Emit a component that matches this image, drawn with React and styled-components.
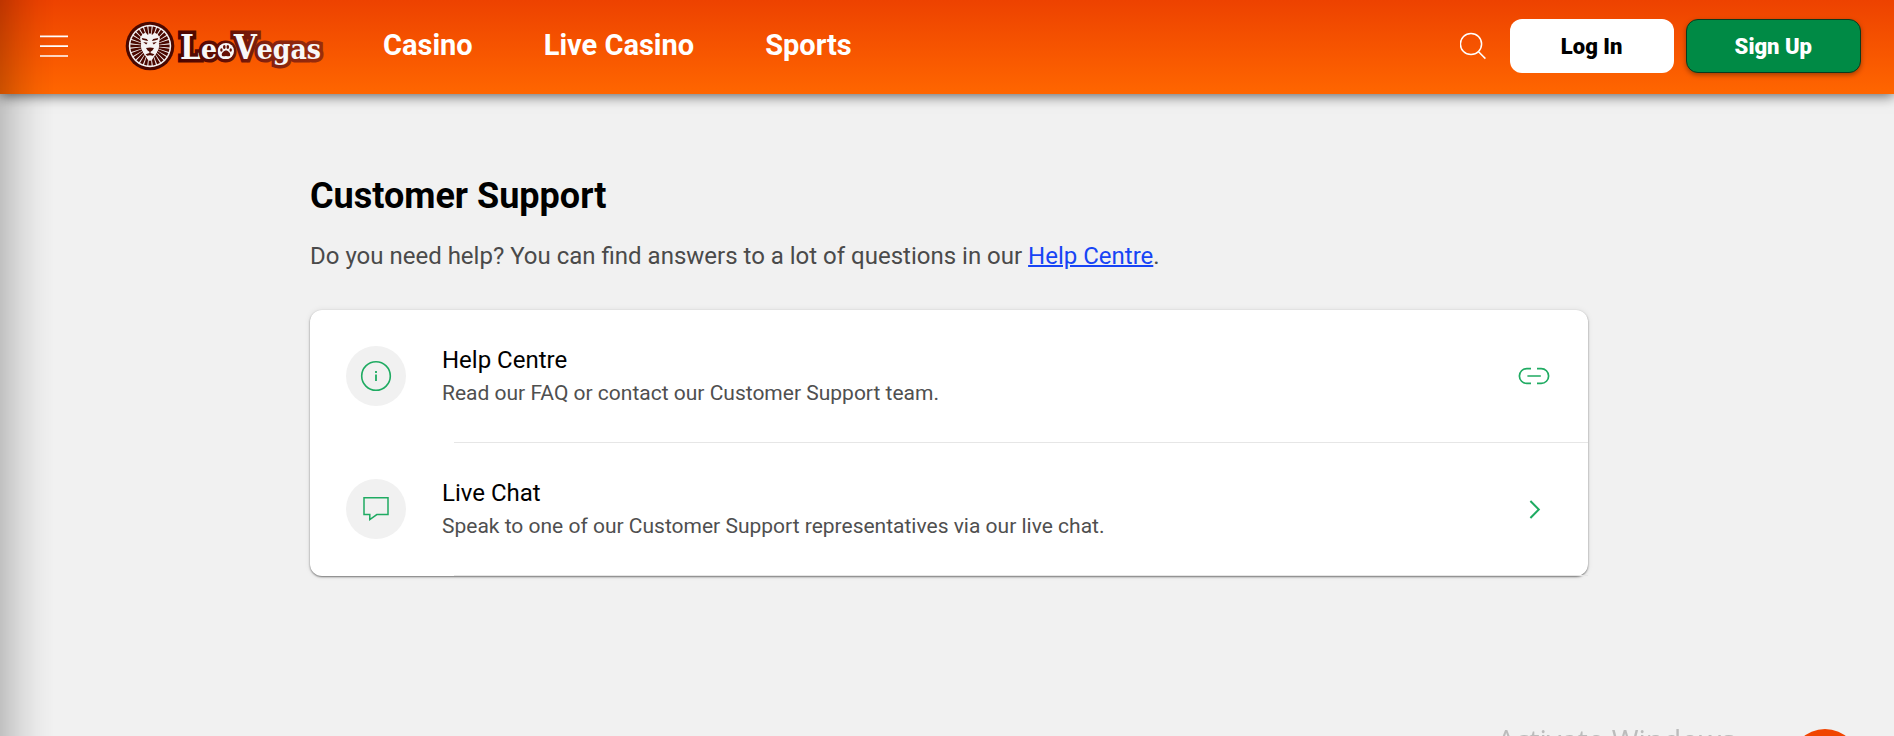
import React from 'react';
import styled, { createGlobalStyle } from 'styled-components';

const GlobalStyle = createGlobalStyle`
  *, *::before, *::after { box-sizing: border-box; }
  body {
    margin: 0;
    background: #f1f1f1;
    color: #000;
    font-family: Roboto, "Liberation Sans", sans-serif;
  }
  button { font: inherit; border: 0; cursor: pointer; }
`;

const Page = styled.div`
  min-height: 100vh;
`;

const Header = styled.header`
  display: flex;
  align-items: center;
  height: 94px;
  padding: 0 33px 2px 40px;
  background: linear-gradient(#ed4200, #ff6600);
  box-shadow: 0 2px 12px rgba(0, 0, 0, 0.6);
`;

const IconButton = styled.button`
  display: flex;
  padding: 0;
  background: none;
  color: #fff;
`;

const LogoLink = styled.a`
  display: flex;
  margin-left: 56px;
`;

const Nav = styled.nav`
  display: flex;
  gap: 71px;
  margin-left: 57px;
  padding-bottom: 2px;
`;

const NavLink = styled.a`
  color: #fff;
  font-size: 29px;
  font-weight: 700;
  line-height: 40px;
  text-decoration: none;
  white-space: nowrap;
`;

const Actions = styled.div`
  display: flex;
  align-items: center;
  gap: 12px;
  margin-left: auto;
`;

const SearchButton = styled(IconButton)`
  margin-right: 12px;
`;

const ActionButton = styled.button`
  height: 54px;
  padding: 0 48px;
  border-radius: 12px;
  background: #fff;
  color: #000;
  font-size: 22px;
  font-weight: 900;
  white-space: nowrap;
  min-width: 164px;
`;

const SignUpButton = styled(ActionButton)`
  min-width: 175px;
  border: 1px solid #0b3a1c;
  background: #008a45;
  color: #fff;
  box-shadow: 0 2px 5px rgba(0, 0, 0, 0.35);
`;

const Main = styled.main`
  max-width: 1282px;
  margin: 0 auto;
  padding: 80px 0 80px 4px;
`;

const Title = styled.h1`
  margin: 0;
  font-size: 36px;
  font-weight: 700;
  line-height: 44px;
`;

const Intro = styled.p`
  margin: 22px 0 38px;
  color: #4a4a4a;
  font-size: 24px;
  line-height: 32px;
`;

const InlineLink = styled.a`
  color: #1744f5;
  text-decoration-thickness: 2px;
`;

const Card = styled.ul`
  margin: 0;
  padding: 0;
  list-style: none;
  border-radius: 12px;
  background: #fff;
  box-shadow: 0 1px 2px rgba(0, 0, 0, 0.5), 0 0 6px rgba(0, 0, 0, 0.08);
`;

const Item = styled.li`
  &::after {
    content: "";
    display: block;
    height: 1px;
    margin-left: 144px;
    background: #e6e6e6;
  }
`;

const ItemLink = styled.a`
  display: flex;
  align-items: center;
  gap: 36px;
  padding: 33px 36px;
  color: inherit;
  text-decoration: none;
`;

const IconDisc = styled.span`
  display: flex;
  flex: none;
  align-items: center;
  justify-content: center;
  width: 60px;
  height: 60px;
  border-radius: 50%;
  background: #f1f1f1;
`;

const ItemText = styled.span`
  display: flex;
  flex: 1;
  flex-direction: column;
`;

const ItemTitle = styled.span`
  font-size: 24px;
  line-height: 34px;
`;

const ItemNote = styled.span`
  color: #4f4f4f;
  font-size: 21px;
  line-height: 32px;
`;

const Watermark = styled.div`
  position: fixed;
  right: 159px;
  bottom: -28px;
  color: #bcbcbc;
  font-family: "Open Sans", "Noto Sans", sans-serif;
  font-size: 29px;
  line-height: 48px;
  pointer-events: none;
`;

const ChatBubble = styled.button`
  position: fixed;
  right: 34px;
  bottom: -63px;
  width: 70px;
  height: 70px;
  border-radius: 50%;
  background: #f04400;
`;

const DrawerShade = styled.div`
  position: fixed;
  inset: 0 auto 0 0;
  width: 54px;
  background: linear-gradient(
    to right,
    rgba(0, 0, 0, 0.2),
    rgba(0, 0, 0, 0.1) 35%,
    rgba(0, 0, 0, 0.03) 68%,
    transparent
  );
  pointer-events: none;
`;

const green = '#1fab62';

function MenuIcon() {
  return (
    <svg width="28" height="24" viewBox="0 0 28 24" fill="none" stroke="#fff" strokeWidth="1.7" aria-hidden="true">
      <path d="M0 2.4H28M0 12.2H28M0 22H28" />
    </svg>
  );
}

function SearchIcon() {
  return (
    <svg width="26" height="28" viewBox="0 0 26 28" fill="none" stroke="#fff" strokeWidth="1.5" aria-hidden="true">
      <circle cx="11" cy="12" r="10.6" />
      <path d="M18.3 19.5L25.4 26.6" />
    </svg>
  );
}

function InfoIcon() {
  return (
    <svg width="32" height="32" viewBox="0 0 32 32" fill="none" stroke={green} aria-hidden="true">
      <circle cx="16" cy="16" r="14.3" strokeWidth="1.6" />
      <path d="M16 14.6V21M16 11V13" strokeWidth="1.8" />
    </svg>
  );
}

function ChatIcon() {
  return (
    <svg width="28" height="26" viewBox="0 0 28 26" fill="none" stroke={green} strokeWidth="1.5" aria-hidden="true">
      <path d="M2 1.8H26V18.6H14.8L7.8 23.6V18.6H2Z" />
    </svg>
  );
}

function LinkIcon() {
  return (
    <svg width="36" height="30" viewBox="0 0 36 30" fill="none" stroke={green} strokeWidth="1.7" aria-hidden="true">
      <path d="M15 7.6H10.8A7.3 7.3 0 0 0 10.8 22.4H15M21 7.6H25.2A7.3 7.3 0 0 1 25.2 22.4H21M11.4 15H24.8" />
    </svg>
  );
}

function ChevronIcon() {
  return (
    <svg width="36" height="30" viewBox="0 0 36 30" fill="none" stroke={green} strokeWidth="2" aria-hidden="true">
      <path d="M14.4 7L22.8 15.5L14.4 24" />
    </svg>
  );
}

const rays = Array.from({ length: 28 }, (_, i) => (i * 360) / 28);

function Logo() {
  return (
    <svg width="202" height="52" viewBox="0 0 202 52" role="img" aria-label="LeoVegas">
      <defs>
        <linearGradient id="logoOutline" gradientUnits="userSpaceOnUse" x1="52" y1="0" x2="200" y2="0">
          <stop offset="0" stopColor="#4a0500" />
          <stop offset="0.35" stopColor="#651005" />
          <stop offset="0.6" stopColor="#82220f" />
          <stop offset="1" stopColor="#9a2c0c" />
        </linearGradient>
      </defs>
      <circle cx="26" cy="26" r="24.3" fill="#4a0800" />
      <circle cx="26" cy="26" r="21.2" fill="#f5f2f2" />
      {rays.map((a) => (
        <path key={a} d="M25.2 17L24.4 6.4H27.6L26.8 17Z" fill="#4a0800" transform={`rotate(${a} 26 26)`} />
      ))}
      <path
        d="M18.4 14.2L21.6 12.6L24 15L26 13L28 15L30.4 12.6L33.6 14.2L36 18L34.8 23.6L33.4 28.4L33 32.6L30 36.8L28.4 39.6L26 41L23.6 39.6L22 36.8L19 32.6L18.6 28.4L17.2 23.6L16 18Z"
        fill="#f5f2f2"
      />
      <path d="M17.8 18L22.8 19L24.2 21L22.6 20.8L18.4 19.8ZM34.2 18L29.2 19L27.8 21L29.4 20.8L33.6 19.8Z" fill="#4a0800" />
      <path d="M19.2 22L23.6 22.8L22.2 24.4ZM32.8 22L28.4 22.8L29.8 24.4Z" fill="#4a0800" />
      <path d="M22 28L26 27.4L30 28L28.4 30.6L26.6 31.8V33L30.4 34.2L28.8 35.8L26 35.2L23.2 35.8L21.6 34.2L25.4 33V31.8L23.6 30.6Z" fill="#4a0800" />
      <text
        x="56"
        y="39"
        fill="#f8f8f8"
        stroke="url(#logoOutline)"
        strokeWidth="7"
        paintOrder="stroke"
        fontFamily="'DejaVu Serif Condensed', 'DejaVu Serif', serif"
        fontWeight="700"
        fontSize="28"
      >
        <tspan fontSize="33">L</tspan>eo<tspan fontSize="33">V</tspan>egas
      </text>
      <ellipse cx="102" cy="31" rx="8" ry="8" fill="#f8f8f8" />
      <g fill="#651005">
        <path d="M102 30.6C104.2 30.6 106.6 33.4 106.2 35.2C105.8 37 103.6 36 102 36C100.4 36 98.2 37 97.8 35.2C97.4 33.4 99.8 30.6 102 30.6Z" />
        <ellipse cx="97.4" cy="30" rx="1.2" ry="1.7" />
        <ellipse cx="100.3" cy="27" rx="1.3" ry="1.9" />
        <ellipse cx="103.8" cy="27" rx="1.3" ry="1.9" />
        <ellipse cx="106.7" cy="30" rx="1.2" ry="1.7" />
      </g>
    </svg>
  );
}

const links = ['Casino', 'Live Casino', 'Sports'];

const items = [
  {
    title: 'Help Centre',
    note: 'Read our FAQ or contact our Customer Support team.',
    Icon: InfoIcon,
    End: LinkIcon,
  },
  {
    title: 'Live Chat',
    note: 'Speak to one of our Customer Support representatives via our live chat.',
    Icon: ChatIcon,
    End: ChevronIcon,
  },
];

export default function App() {
  return (
    <Page>
      <GlobalStyle />
      <Header>
        <IconButton type="button" aria-label="Menu">
          <MenuIcon />
        </IconButton>
        <LogoLink href="#home">
          <Logo />
        </LogoLink>
        <Nav>
          {links.map((name) => (
            <NavLink key={name} href="#nav">{name}</NavLink>
          ))}
        </Nav>
        <Actions>
          <SearchButton type="button" aria-label="Search">
            <SearchIcon />
          </SearchButton>
          <ActionButton type="button">Log In</ActionButton>
          <SignUpButton type="button">Sign Up</SignUpButton>
        </Actions>
      </Header>
      <Main>
        <Title>Customer Support</Title>
        <Intro>
          Do you need help? You can find answers to a lot of questions in our{' '}
          <InlineLink href="#help">Help Centre</InlineLink>.
        </Intro>
        <Card>
          {items.map(({ title, note, Icon, End }) => (
            <Item key={title}>
              <ItemLink href="#support">
                <IconDisc>
                  <Icon />
                </IconDisc>
                <ItemText>
                  <ItemTitle>{title}</ItemTitle>
                  <ItemNote>{note}</ItemNote>
                </ItemText>
                <End />
              </ItemLink>
            </Item>
          ))}
        </Card>
      </Main>
      <DrawerShade />
      <Watermark>Activate Windows</Watermark>
      <ChatBubble type="button" aria-label="Chat" />
    </Page>
  );
}
